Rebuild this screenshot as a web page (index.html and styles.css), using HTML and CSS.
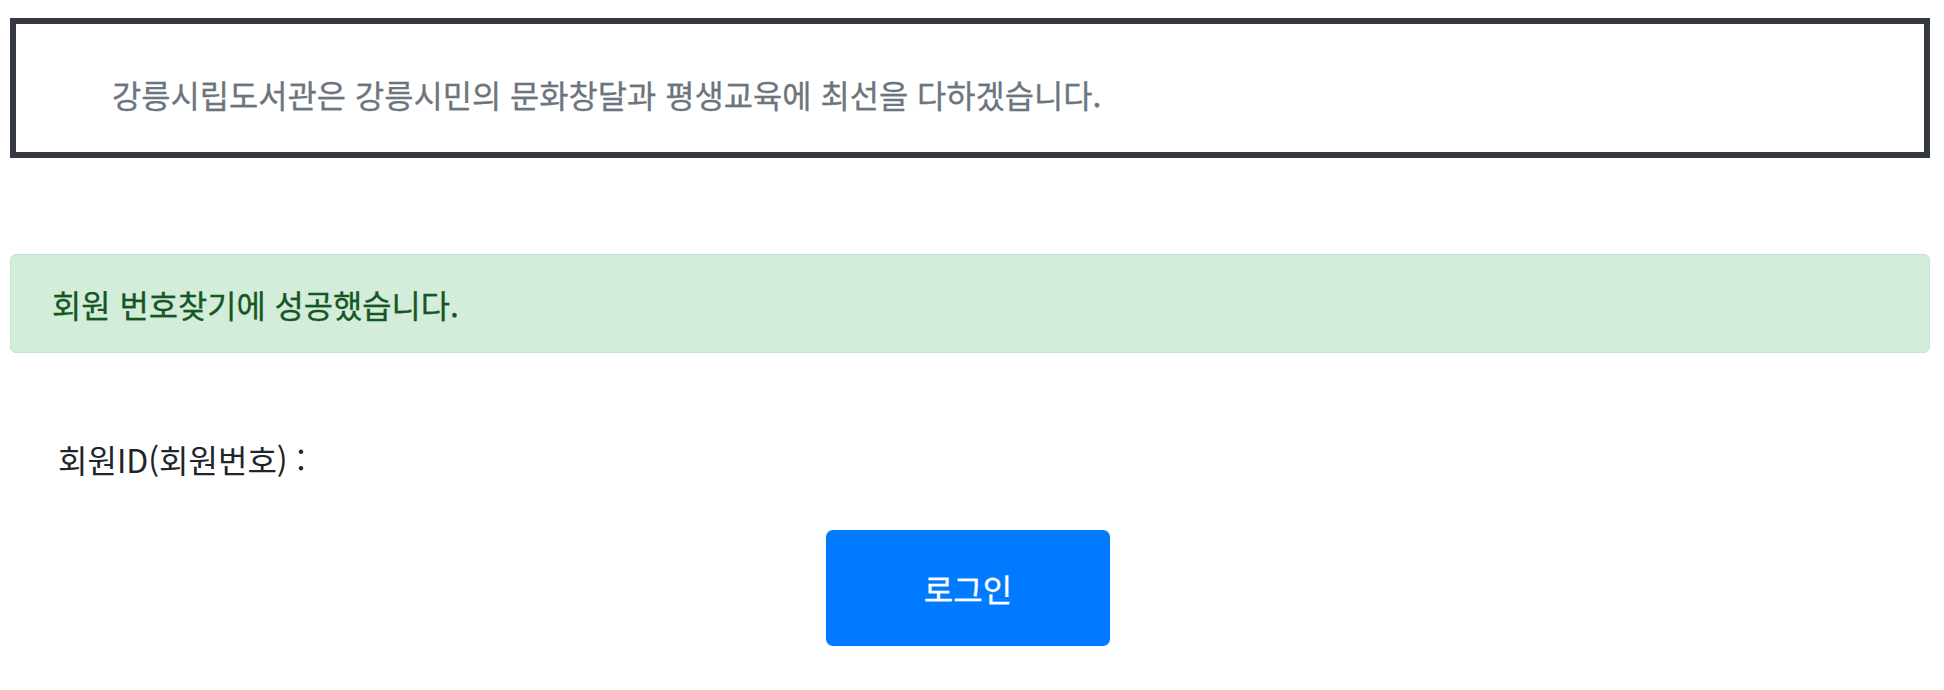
FILE: index.html
```html
<!DOCTYPE html>
<html lang="ko">
<head>
<meta charset="utf-8">
<title>회원번호찾기</title>
<link rel="stylesheet" href="styles.css">
</head>
<body>
<div class="page">
  <div class="intro">
    <p class="intro-text">강릉시립도서관은 강릉시민의 문화창달과 평생교육에 최선을 다하겠습니다.</p>
  </div>
  <div class="alert">회원 번호찾기에 성공했습니다.</div>
  <div class="field">회원ID(회원번호) :</div>
  <div class="actions">
    <button class="btn" type="button">로그인</button>
  </div>
</div>
</body>
</html>
```

FILE: styles.css
```css
html, body {
  margin: 0;
  padding: 0;
  background: #fff;
}
body {
  font-family: "Noto Sans CJK KR", "Noto Sans", sans-serif;
  color: #212529;
}
.page {
  padding: 18px 14px 0 10px;
}
.intro {
  border: 6px solid #343a40;
  height: 128px;
  box-sizing: content-box;
  display: flex;
  align-items: center;
  padding: 0 0 0 96px;
}
.intro-text {
  margin: 11px 0 0 0;
  font-size: 31.8px;
  color: #6c757d;
  line-height: 40px;
  -webkit-text-stroke: 0.3px #6c757d;
}
.alert {
  margin-top: 96px;
  height: 99px;
  box-sizing: border-box;
  border: 1px solid #c3e6cb;
  background: #d4edda;
  color: #155724;
  border-radius: 6px;
  font-size: 31.8px;
  line-height: 40px;
  display: flex;
  align-items: center;
  padding: 0 0 0 41px;
  -webkit-text-stroke: 0.3px #155724;
}
.field {
  margin-top: 86px;
  padding-left: 48px;
  font-size: 32px;
  line-height: 40px;
}
.actions {
  display: flex;
  justify-content: center;
  margin-top: 51px;
  padding-right: 4px;
}
.btn {
  width: 284px;
  height: 116px;
  border: none;
  border-radius: 7px;
  background: #007bff;
  color: #fff;
  font-family: inherit;
  font-size: 32px;
  line-height: 40px;
  padding: 0;
  -webkit-text-stroke: 0.3px #fff;
}
```
